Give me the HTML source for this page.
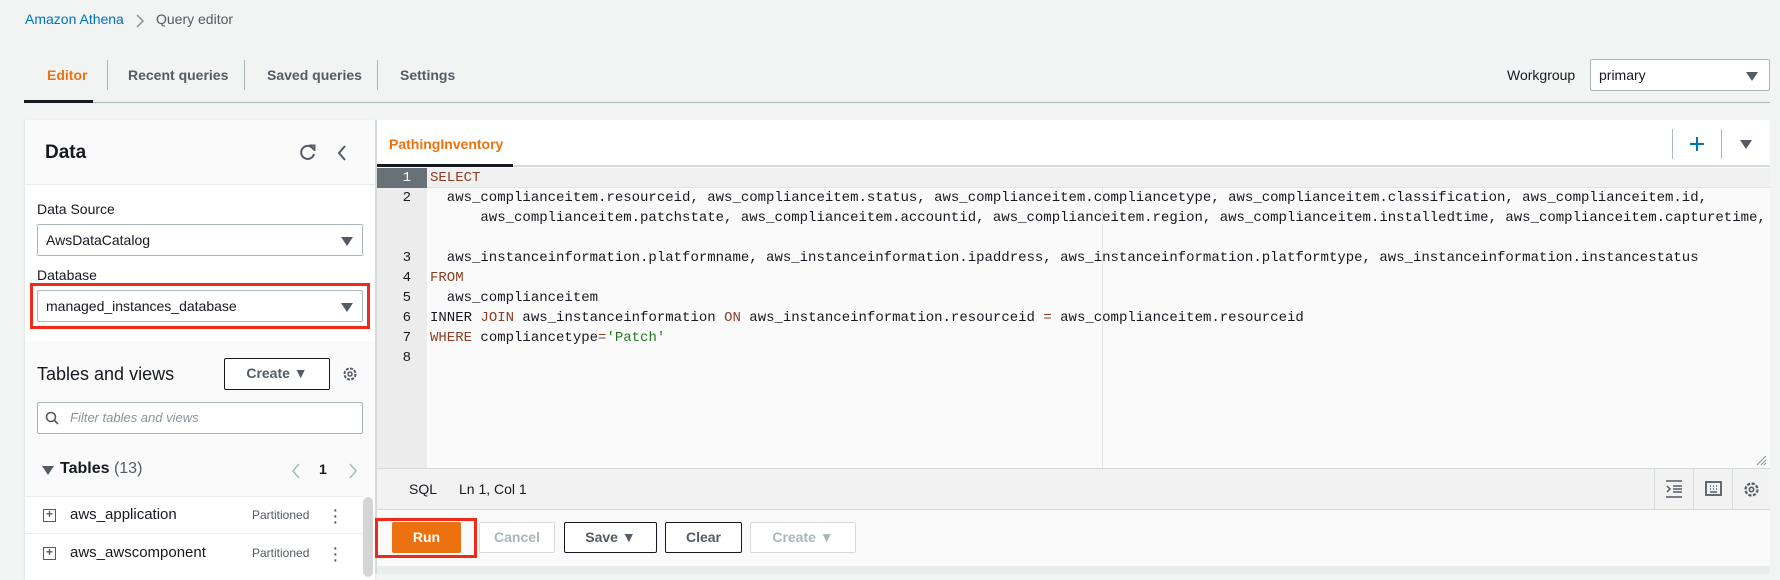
<!DOCTYPE html>
<html><head><meta charset="utf-8"><style>
*{box-sizing:border-box;margin:0;padding:0}
body{width:1780px;height:574px;background:#f2f3f3;font-family:"Liberation Sans",sans-serif;color:#16191f;position:relative;overflow:hidden;font-size:14px}
.a{position:absolute;white-space:nowrap}
.mono{font-family:"Liberation Mono",monospace;font-size:14px}
.k{color:#8b3f25}
.s{color:#1d7a1d}
.sel{position:absolute;background:#fff;border:1px solid #aab7b8;border-radius:2px}
.caret{position:absolute;width:0;height:0;border-left:6px solid transparent;border-right:6px solid transparent;border-top:9px solid #545b64}
.btn{position:absolute;border:1px solid #545b64;border-radius:2px;background:#fff;font-weight:bold;color:#545b64;text-align:center;line-height:29px;font-size:14px}
.dis{border-color:#d5dbdb;color:#aab7b8}
.gl{position:absolute;left:0;width:50px;text-align:right;padding-right:16px}
</style></head><body>
<div class="a" style="left:25px;top:11px;color:#0073bb;font-size:14px">Amazon Athena</div>
<svg class="a" style="left:135px;top:13px" width="10" height="16"><path d="M2 2l6 6-6 6" stroke="#879596" stroke-width="1.5" fill="none"/></svg>
<div class="a" style="left:156px;top:11px;color:#545b64">Query editor</div>

<div class="a" style="left:47px;top:67px;color:#ec7211;font-weight:bold">Editor</div>
<div class="a" style="left:107px;top:60px;width:1px;height:30px;background:#aab7b8"></div>
<div class="a" style="left:128px;top:67px;color:#545b64;font-weight:bold">Recent queries</div>
<div class="a" style="left:244px;top:60px;width:1px;height:30px;background:#aab7b8"></div>
<div class="a" style="left:267px;top:67px;color:#545b64;font-weight:bold">Saved queries</div>
<div class="a" style="left:377px;top:60px;width:1px;height:30px;background:#aab7b8"></div>
<div class="a" style="left:400px;top:67px;color:#545b64;font-weight:bold">Settings</div>
<div class="a" style="left:25px;top:102px;width:1745px;height:1px;background:#aab7b8"></div>
<div class="a" style="left:24px;top:100px;width:69px;height:3px;background:#16191f"></div>
<div class="a" style="left:1507px;top:67px">Workgroup</div>
<div class="sel" style="left:1590px;top:59px;width:180px;height:32px"><span class="a" style="left:8px;top:7px">primary</span><div class="caret" style="left:155px;top:12px"></div></div>

<!-- left panel -->
<div class="a" style="left:25px;top:120px;width:350px;height:460px;background:#fff;box-shadow:0 1px 2px rgba(0,0,0,.15)"></div>
<div class="a" style="left:25px;top:120px;width:350px;height:65px;background:#fafafa;border-bottom:1px solid #eaeded"></div>
<div class="a" style="left:45px;top:142px;font-size:19px;font-weight:bold">Data</div>
<svg class="a" style="left:299px;top:143px" width="18" height="18"><path d="M14.5 6.5A6.5 6.5 0 1 0 15 11" stroke="#545b64" stroke-width="2" fill="none"/><path d="M10 2.5h5.5V8" stroke="#545b64" stroke-width="2" fill="none"/></svg>
<svg class="a" style="left:336px;top:144px" width="12" height="18"><path d="M9 2L3 9l6 7" stroke="#545b64" stroke-width="2" fill="none"/></svg>
<div class="a" style="left:37px;top:201px">Data Source</div>
<div class="sel" style="left:37px;top:224px;width:326px;height:32px"><span class="a" style="left:8px;top:7px">AwsDataCatalog</span><div class="caret" style="left:303px;top:12px"></div></div>
<div class="a" style="left:37px;top:267px">Database</div>
<div class="a" style="left:30px;top:283px;width:340px;height:46px;border:3px solid #f0291b"></div>
<div class="sel" style="left:37px;top:290px;width:326px;height:32px"><span class="a" style="left:8px;top:7px">managed_instances_database</span><div class="caret" style="left:303px;top:12px"></div></div>
<div class="a" style="left:25px;top:341px;width:350px;height:155px;background:#fafafa"></div>
<div class="a" style="left:37px;top:364px;font-size:18px">Tables and views</div>
<div class="btn" style="left:224px;top:358px;width:106px;height:32px;border-color:#16191f;color:#545b64">Create &#9660;</div>
<svg class="a" style="left:342px;top:366px" width="16" height="16"><circle cx="8" cy="8" r="5.5" stroke="#545b64" stroke-width="2" fill="none" stroke-dasharray="3 1.3"/><circle cx="8" cy="8" r="2" stroke="#545b64" stroke-width="1.5" fill="none"/></svg>
<div class="sel" style="left:37px;top:402px;width:326px;height:32px"></div>
<svg class="a" style="left:45px;top:411px" width="14" height="14"><circle cx="6" cy="6" r="4.5" stroke="#545b64" stroke-width="1.6" fill="none"/><path d="M9.5 9.5l3.5 3.5" stroke="#545b64" stroke-width="1.6"/></svg>
<div class="a" style="left:70px;top:410px;color:#879596;font-style:italic;font-size:13px">Filter tables and views</div>
<div class="a" style="left:42px;top:466px;width:0;height:0;border-left:6px solid transparent;border-right:6px solid transparent;border-top:9px solid #545b64"></div>
<div class="a" style="left:60px;top:460px;font-size:16px"><b>Tables</b> <span style="color:#545b64">(13)</span></div>
<svg class="a" style="left:291px;top:462px" width="10" height="18"><path d="M8 2L2 9l6 7" stroke="#aab7b8" stroke-width="1.5" fill="none"/></svg>
<div class="a" style="left:319px;top:461px;font-weight:bold">1</div>
<svg class="a" style="left:348px;top:462px" width="10" height="18"><path d="M2 2l6 7-6 7" stroke="#aab7b8" stroke-width="1.5" fill="none"/></svg>
<div class="a" style="left:25px;top:496px;width:338px;height:1px;background:#eaeded"></div>
<div class="a" style="left:25px;top:533px;width:338px;height:1px;background:#eaeded"></div>
<div class="a" style="left:363px;top:497px;width:10px;height:80px;background:#d5d5d5;border-radius:5px"></div>
<div class="a" style="left:43px;top:509px;width:13px;height:13px;border:1.5px solid #545b64;font-size:12px;line-height:9px;text-align:center;font-weight:bold;color:#545b64">+</div>
<div class="a" style="left:70px;top:506px;font-size:15px">aws_application</div>
<div class="a" style="left:252px;top:508px;font-size:12px;color:#545b64">Partitioned</div>
<div class="a" style="left:332px;top:507px;width:3px;line-height:6px;font-size:20px;color:#545b64">·<br>·<br>·</div>
<div class="a" style="left:43px;top:547px;width:13px;height:13px;border:1.5px solid #545b64;font-size:12px;line-height:9px;text-align:center;font-weight:bold;color:#545b64">+</div>
<div class="a" style="left:70px;top:544px;font-size:15px">aws_awscomponent</div>
<div class="a" style="left:252px;top:546px;font-size:12px;color:#545b64">Partitioned</div>
<div class="a" style="left:332px;top:545px;width:3px;line-height:6px;font-size:20px;color:#545b64">·<br>·<br>·</div>

<!-- right panel -->
<div class="a" style="left:375px;top:120px;width:1395px;height:454px;background:#fafafa;border-left:2px solid #d5dbdb"></div>
<div class="a" style="left:377px;top:120px;width:1393px;height:47px;background:#fff;border-bottom:2px solid #d5dbdb"></div>
<div class="a" style="left:389px;top:136px;color:#ec7211;font-weight:bold;font-size:14px">PathingInventory</div>
<div class="a" style="left:377px;top:164px;width:136px;height:3px;background:#16191f"></div>
<div class="a" style="left:1672px;top:129px;width:1px;height:30px;background:#aab7b8"></div>
<div class="a" style="left:1721px;top:129px;width:1px;height:30px;background:#aab7b8"></div>
<svg class="a" style="left:1689px;top:136px" width="16" height="16"><path d="M8 1v14M1 8h14" stroke="#0073bb" stroke-width="2"/></svg>
<div class="caret" style="left:1740px;top:140px;border-top-color:#545b64"></div>

<div class="a" style="left:377px;top:168px;width:1393px;height:20px;background:#f0f0f0;border-bottom:1px solid #e3e3e3"></div>
<div class="a" style="left:377px;top:168px;width:50px;height:300px;background:#ececec"></div>
<div class="a" style="left:377px;top:168px;width:50px;height:20px;background:#687078"></div>
<div class="a" style="left:1102px;top:188px;width:1px;height:280px;background:#e3e3e3"></div>
<div class="a mono" style="left:377px;top:168px;line-height:20px;width:50px">
<div class="gl" style="position:absolute;top:0;color:#fff">1</div>
<div class="gl" style="position:absolute;top:20px">2</div>
<div class="gl" style="position:absolute;top:80px">3</div>
<div class="gl" style="position:absolute;top:100px">4</div>
<div class="gl" style="position:absolute;top:120px">5</div>
<div class="gl" style="position:absolute;top:140px">6</div>
<div class="gl" style="position:absolute;top:160px">7</div>
<div class="gl" style="position:absolute;top:180px">8</div>
</div>
<pre class="mono" style="position:absolute;white-space:pre;left:430px;top:168px;line-height:20px;color:#16191f"><span class="k">SELECT</span>
  aws_complianceitem.resourceid, aws_complianceitem.status, aws_complianceitem.compliancetype, aws_complianceitem.classification, aws_complianceitem.id,
      aws_complianceitem.patchstate, aws_complianceitem.accountid, aws_complianceitem.region, aws_complianceitem.installedtime, aws_complianceitem.capturetime,

  aws_instanceinformation.platformname, aws_instanceinformation.ipaddress, aws_instanceinformation.platformtype, aws_instanceinformation.instancestatus
<span class="k">FROM</span>
  aws_complianceitem
INNER <span class="k">JOIN</span> aws_instanceinformation <span class="k">ON</span> aws_instanceinformation.resourceid <span class="k">=</span> aws_complianceitem.resourceid
<span class="k">WHERE</span> compliancetype<span class="k">=</span><span class="s">'Patch'</span>
</pre>
<svg class="a" style="left:1755px;top:454px" width="12" height="12"><path d="M2 11L11 2M6 11l5-5M9 11l2-2" stroke="#879596" stroke-width="1"/></svg>

<div class="a" style="left:377px;top:468px;width:1393px;height:42px;background:#f2f2f2;border-top:1px solid #d5dbdb;border-bottom:1px solid #d5dbdb"></div>
<div class="a" style="left:409px;top:481px">SQL</div>
<div class="a" style="left:459px;top:481px">Ln 1, Col 1</div>
<div class="a" style="left:1654px;top:469px;width:1px;height:40px;background:#d5dbdb"></div>
<div class="a" style="left:1693px;top:469px;width:1px;height:40px;background:#d5dbdb"></div>
<div class="a" style="left:1732px;top:469px;width:1px;height:40px;background:#d5dbdb"></div>
<svg class="a" style="left:1666px;top:480px" width="17" height="18"><path d="M0 1h16M0 17h16M7 6h9M7 9h9M7 12h9" stroke="#545b64" stroke-width="1.6"/><path d="M1 6l3 3-3 3" stroke="#545b64" stroke-width="1.5" fill="none"/></svg>
<svg class="a" style="left:1705px;top:481px" width="17" height="16"><rect x="1" y="1" width="15" height="13" stroke="#545b64" stroke-width="1.8" fill="none"/><path d="M5 5h1M8 5h1M11 5h1M5 8h1M8 8h1M11 8h1M5 11h7" stroke="#545b64" stroke-width="1.6"/></svg>
<svg class="a" style="left:1743px;top:481px" width="17" height="17"><circle cx="8.5" cy="8.5" r="6" stroke="#545b64" stroke-width="2.2" fill="none" stroke-dasharray="3.2 1.5"/><circle cx="8.5" cy="8.5" r="2.2" stroke="#545b64" stroke-width="1.6" fill="none"/></svg>

<div class="a" style="left:377px;top:566px;width:1393px;height:8px;background:#eaeded"></div>
<div class="a" style="left:375px;top:518px;width:102px;height:40px;border:3px solid #f0291b"></div>
<div class="btn" style="left:392px;top:522px;width:69px;height:31px;background:#ec7211;border-color:#ec7211;color:#fff">Run</div>
<div class="btn dis" style="left:479px;top:522px;width:76px;height:31px">Cancel</div>
<div class="btn" style="left:564px;top:522px;width:93px;height:31px;border-color:#16191f">Save &#9660;</div>
<div class="btn" style="left:665px;top:522px;width:77px;height:31px;border-color:#16191f">Clear</div>
<div class="btn dis" style="left:750px;top:522px;width:106px;height:31px">Create &#9660;</div>
</body></html>
